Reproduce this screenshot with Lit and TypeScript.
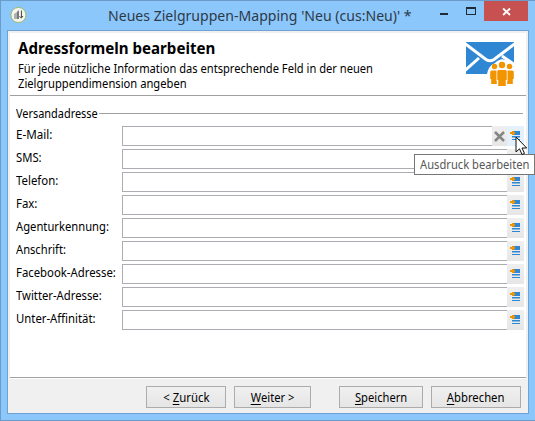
import { LitElement, html, css, svg } from "lit";
import { customElement } from "lit/decorators.js";

const exprIcon = html`<svg class="expr" width="17" height="20" viewBox="0 0 17 20" shape-rendering="crispEdges">
  <path fill="#2f86d2" d="M7 5h6v4H7zM5 10h8v1H5zM5 13h8v1H5z"/>
  <path fill="#5ea2dc" d="M5 11h8v1H5z" opacity=".7"/>
  <path fill="#f29400" d="M4 6h1V5h2v1h1v2H7v1H5V8H3V6z"/>
</svg>`;

const torso = svg`<path d="M-4.500-4.500Q-4.500-6-3-6h6Q4.500-6 4.500-4.500V4H3.500V10H-3.500V4H-4.500z"/>`;
const sideTorso = svg`<path d="M-3.800-3Q-3.800-4.500-2-4.500h4Q3.800-4.500 3.800-3V4H2.800V9H-2.800V4H-3.800z"/>`;

@customElement("app-root")
export class AppRoot extends LitElement {
  static styles = css`
    :host { display: block; width: 535px; height: 421px; font: 12px/15px "Noto Sans", "Open Sans", sans-serif; color: #000; }
    * { box-sizing: border-box; }
    svg { display: block; }
    .window { position: relative; width: 535px; height: 421px; padding: 0 6px 7px; background: #8cc7fb;
      border: solid #6c9bc9; border-width: 1px 0 1px 1px; overflow: hidden; }
    .titlebar { height: 29px; display: flex; align-items: flex-start; width: 521px; }
    .logo { margin: 5px 0 0 3px; width: 17px; }
    .title { flex: 1; padding-left: 81px; font-size: 15px; line-height: 28px; white-space: nowrap; color: #2c3a48; }
    .fit { display: inline-block; transform: scaleX(var(--s)); transform-origin: 0 50%; white-space: nowrap; }
    .client { height: 384px; border: 1px solid #6fa3d5; background: #f0f0f0; padding: 2px; width: 522px; }
    .panel { background: #fff; height: 345px; border-bottom: 1px solid #a0a0a0; width: 516px; }
    .header { height: 63px; border-bottom: 1px solid #a0a0a0; display: flex; justify-content: space-between; padding: 0 12px 0 8px; }
    h1 { margin: 5px 0 0; font-size: 16px; line-height: 21px; height: 22px; font-weight: 700; }
    .header p { margin: 1px 0 0; }
    .line { display: block; height: 15px; }
    .mail { margin-top: 9px; }
    .form { padding: 10px 2px 0 6px; }
    .group { display: flex; height: 16px; }
    .group .name { width: 83px; }
    .group .name .fit { width: 83px; }
    .group .rule { height: 1px; background: #a0a0a0; margin-top: 7px; width: 424px; }
    .rows { padding-top: 4px; }
    .row { display: flex; height: 20px; margin-bottom: 3px; }
    .label { width: 106px; line-height: 18px; }
    .box { flex: 1; border: 1px solid #abadb3; border-right: 0; background: #fff; }
    .btn { background: linear-gradient(#efefef, #e6e6e6); width: 17px; }
    .btn.clear { width: 15px; }
    .btn.hot { background: #e4f0fb; }
    .footer { display: flex; padding: 7px 5px 0; border-top: 1px solid #fff; }
    button { font: inherit; color: #000; height: 22px; padding: 0; border: 1px solid #acacac; background: linear-gradient(#f0f0f0, #e5e5e5); line-height: 19px; }
    button .fit { transform-origin: 50% 50%; }
    .back { width: 80px; margin-left: 131px; }
    .next { width: 77px; margin-left: 8px; }
    .save { width: 84px; margin-left: 28px; }
    .cancel { width: 90px; margin-left: 8px; }
    u { text-decoration: none; border-bottom: 1px solid #000; display: inline-block; line-height: 13px; }
    .tip { position: absolute; left: 413px; top: 153px; width: 121px; height: 21px; border: 1px solid #767676; background: #fff;
      color: #575757; line-height: 19px; padding-left: 5px; }
    .cursor { position: absolute; left: 514px; top: 135px; }
  `;

  private text(t: unknown, s: number) {
    return html`<span class="fit" style="--s:${s}">${t}</span>`;
  }

  render() {
    const rows: [string, number][] = [["E-Mail:", 0.97], ["SMS:", 0.94], ["Telefon:", 0.95], ["Fax:", 0.95],
      ["Agenturkennung:", 0.935], ["Anschrift:", 0.93], ["Facebook-Adresse:", 0.945], ["Twitter-Adresse:", 0.94], ["Unter-Affinität:", 0.945]];
    return html`<div class="window">
      <div class="titlebar">
        <svg class="logo" width="17" height="18" viewBox="0 0 17 18"><circle cx="8.500" cy="9" r="7.600" fill="#f4f4f0" stroke="#9ab867"/>
          <path d="M4 8l3-2v7H4z" fill="#b0b0b0"/><path d="M7 13V6l2-2v9z" fill="#777"/><path d="M11.500 4.500v7M9.500 10.500l2 1.500 1.500-2" fill="none" stroke="#444"/></svg>
        <div class="title">${this.text("Neues Zielgruppen-Mapping 'Neu (cus:Neu)' *", 0.938)}</div>
        <svg width="97" height="21" viewBox="0 0 97 21" shape-rendering="crispEdges">
          <path fill="#1f2a36" d="M8 12h8v2H8zM34 6h10v8H34zM35 8v5h8V8z" fill-rule="evenodd"/>
          <path fill="#c75050" d="M52 0h45v20H52z"/>
          <path d="M71.500 7.500l7 6.500M78.500 7.500l-7 6.500" stroke="#fff" stroke-width="1.800" shape-rendering="auto"/>
        </svg>
      </div>
      <div class="client">
        <div class="panel">
          <div class="header">
            <div>
              <h1>${this.text("Adressformeln bearbeiten", 0.943)}</h1>
              <p><span class="line">${this.text("Für jede nützliche Information das entsprechende Feld in der neuen", 0.927)}</span>
                <span class="line">${this.text("Zielgruppendimension angeben", 0.932)}</span></p>
            </div>
            <svg class="mail" width="48" height="46" viewBox="0 0 48 46">
              <path fill="#2f86d2" d="M0 0h48v32H0z"/>
              <path d="M-1 1.500L20 17.500Q24 20 28 17.500L49 1.500M-1 28.500L13 16M49 23L36 14" fill="none" stroke="#fff" stroke-width="3"/>
              <path fill="#fff" d="M21 46V32Q22 24 29 21Q36 14 43 20Q48 21 48 26V46z"/>
              <g fill="#f29400">
                <g transform="translate(28 33)"><circle cx="0.500" cy="-8.500" r="2.700"/>${sideTorso}</g>
                <g transform="translate(44 33)"><circle cx="-0.500" cy="-8.500" r="2.700"/>${sideTorso}</g>
                <g transform="translate(36 34)"><circle cx="0" cy="-11" r="3.200"/><g stroke="#fff" stroke-width="2" paint-order="stroke">${torso}</g>${torso}</g>
              </g>
            </svg>
          </div>
          <div class="form">
            <div class="group"><span class="name">${this.text("Versandadresse", 0.91)}</span><span class="rule"></span></div>
            <div class="rows">
            ${rows.map(([t, s], i) => html`<div class="row">
              <span class="label">${this.text(t, s)}</span><span class="box"></span>
              ${i === 0 ? html`<span class="btn clear"><svg width="15" height="20" viewBox="0 0 15 20"><path d="M3 6l9 9M12 6l-9 9" stroke="#858585" stroke-width="2.500"/></svg></span>` : ""}
              <span class="btn ${i === 0 ? "hot" : ""}">${exprIcon}</span>
            </div>`)}
            </div>
          </div>
        </div>
        <div class="footer">
          <button class="back">${this.text(html`&lt; <u>Z</u>urück`, 0.95)}</button>
          <button class="next">${this.text(html`<u>W</u>eiter &gt;`, 0.93)}</button>
          <button class="save">${this.text(html`<u>S</u>peichern`, 0.93)}</button>
          <button class="cancel">${this.text(html`<u>A</u>bbrechen`, 0.94)}</button>
        </div>
      </div>
      <div class="tip">${this.text("Ausdruck bearbeiten", 0.932)}</div>
      <svg class="cursor" width="13" height="20" viewBox="0 0 13 20"><path d="M1 1V16L4.500 12.800L7 18.500L9.500 17.400L7 12H11.700z" fill="#fff" stroke="#111" stroke-width="1"/></svg>
    </div>`;
  }
}
